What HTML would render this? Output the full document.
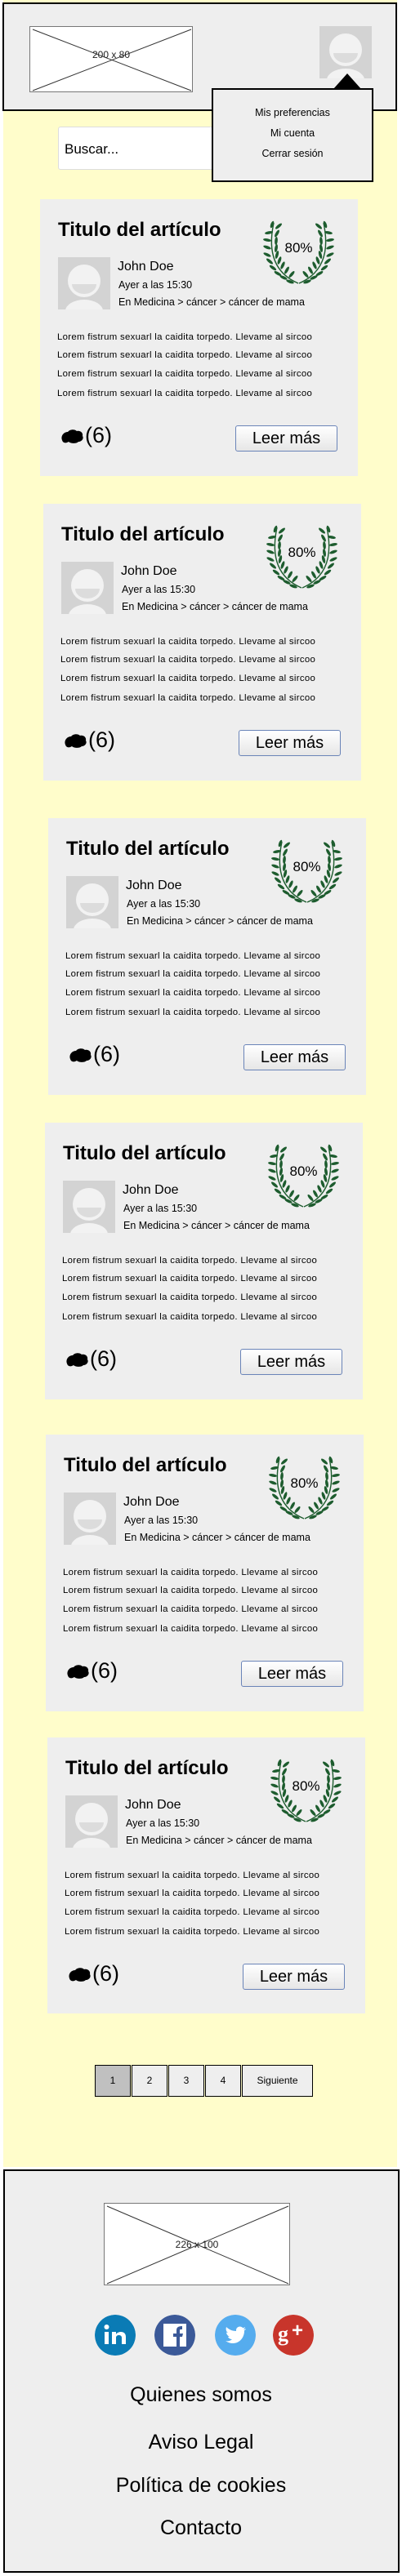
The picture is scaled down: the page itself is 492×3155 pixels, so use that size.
<!DOCTYPE html>
<html><head><meta charset="utf-8">
<style>
*{margin:0;padding:0;box-sizing:border-box}
body{width:492px;height:3155px;background:#fff;position:relative;font-family:"Liberation Sans",Arial,sans-serif;color:#000;overflow:hidden}
.abs{position:absolute}
#yellow{left:4px;top:0;width:482px;height:2654px;background:#fffdcb}
#header{left:3px;top:3px;width:483px;height:133px;background:#eee;border:2px solid #000}
.ph{background:#fff;border:1px solid #777;overflow:hidden}
.ph svg{position:absolute;left:0;top:0}
.ph span{position:absolute;left:0;right:0;text-align:center;font-size:12px;color:#222}
.av{background:#d3d3d3;overflow:hidden}
#dd{left:259px;top:108px;width:198px;height:115px;background:#eee;border:2px solid #000;text-align:center;font-size:12.5px}
#dd div{position:absolute;left:0;right:0}
#search{left:71px;top:155px;width:250px;height:53px;background:#fff;border:1px solid #ddd;border-radius:3px;font-size:17px;padding:17px 0 0 7px}
.card{position:absolute;width:389px;height:339px;background:#eee}
.card .t{position:absolute;left:22px;top:24px;font-size:24px;font-weight:bold;white-space:nowrap}
.card .a{position:absolute;left:22px;top:71px;width:64px;height:64px}
.card .n{position:absolute;left:95px;top:74px;font-size:16px;white-space:nowrap}
.card .m1{position:absolute;left:96px;top:98px;font-size:12.5px;white-space:nowrap}
.card .m2{position:absolute;left:96px;top:119px;font-size:12.5px;white-space:nowrap}
.card .lw{position:absolute;left:270px;top:25px;width:93px;height:80px}
.card .pc{position:absolute;left:270px;top:50px;width:93px;text-align:center;font-size:17px}
.card .lo{position:absolute;left:21px;font-size:11.4px;white-space:nowrap;letter-spacing:0.3px}
.card .ci{position:absolute;left:25px;top:281px}
.card .cn{position:absolute;left:55px;top:274px;font-size:27px}
.card .b{position:absolute;left:239px;top:277px;width:125px;height:32px;border:1px solid #6a84b8;border-radius:3px;background:linear-gradient(#fff,#e6e6e6);text-align:center;font-size:20px;line-height:30px}
.pg{position:absolute;top:2529px;height:39px;border:1px solid #000;background:#eee;font-size:12px;text-align:center;line-height:37px}
#footer{left:4px;top:2657px;width:485px;height:494px;background:#eee;border:2px solid #000}
.fl{position:absolute;left:0;width:492px;text-align:center;font-size:25px}
.soc{position:absolute;top:2835px;width:50px;height:50px;border-radius:50%}
</style></head><body>
<svg width="0" height="0" style="position:absolute">
<defs>
<g id="half" fill="#1d5c2e">
<path d="M46,78 Q4,60 16,4" stroke="#1d5c2e" stroke-width="1.4" fill="none"/>
<ellipse cx="36" cy="76" rx="5" ry="1.8" transform="rotate(20 36 76)"/>
<ellipse cx="38" cy="67" rx="5" ry="1.8" transform="rotate(-50 38 67)"/>
<ellipse cx="28" cy="71" rx="5" ry="1.8" transform="rotate(25 28 71)"/>
<ellipse cx="32" cy="62" rx="5" ry="1.8" transform="rotate(-60 32 62)"/>
<ellipse cx="21" cy="66" rx="5" ry="1.8" transform="rotate(30 21 66)"/>
<ellipse cx="27" cy="56" rx="5" ry="1.8" transform="rotate(-65 27 56)"/>
<ellipse cx="15" cy="59" rx="5" ry="1.8" transform="rotate(35 15 59)"/>
<ellipse cx="23" cy="50" rx="5" ry="1.8" transform="rotate(-70 23 50)"/>
<ellipse cx="11" cy="51" rx="5" ry="1.8" transform="rotate(40 11 51)"/>
<ellipse cx="20" cy="43" rx="5" ry="1.8" transform="rotate(-75 20 43)"/>
<ellipse cx="8" cy="43" rx="5" ry="1.8" transform="rotate(25 8 43)"/>
<ellipse cx="19" cy="35" rx="5" ry="1.8" transform="rotate(-80 19 35)"/>
<ellipse cx="8" cy="34" rx="5" ry="1.8" transform="rotate(20 8 34)"/>
<ellipse cx="19" cy="26" rx="5" ry="1.8" transform="rotate(-85 19 26)"/>
<ellipse cx="8" cy="25" rx="5" ry="1.8" transform="rotate(10 8 25)"/>
<ellipse cx="20" cy="17" rx="5" ry="1.8" transform="rotate(-60 20 17)"/>
<ellipse cx="10" cy="16" rx="5" ry="1.8" transform="rotate(-10 10 16)"/>
<ellipse cx="22" cy="8" rx="5" ry="1.8" transform="rotate(-40 22 8)"/>
<ellipse cx="14" cy="6" rx="4.5" ry="1.8" transform="rotate(-70 14 6)"/>
</g>
<g id="laurel"><use href="#half"/><use href="#half" transform="translate(93,0) scale(-1,1)"/></g>
<g id="avatar">
<rect width="64" height="64" fill="#d3d3d3"/>
<ellipse cx="32" cy="66" rx="23" ry="14" fill="#f2f2f2"/>
<circle cx="32" cy="29" r="20" fill="#f2f2f2"/>
<path d="M17,33 H47 A15,12 0 0 1 17,33 Z" fill="#dcdcdc"/>
</g>
<g id="cm"><path d="M2,14 C0,9 4,4 9,4 C11,1 17,0 20,3 C24,2 28,5 27,9 C29,12 26,16 22,16 C19,19 12,18 10,16 C7,18 3,18 2,14 Z" fill="#000"/></g>
</defs></svg>

<div id="yellow" class="abs"></div>
<div id="header" class="abs"></div>
<div class="abs ph" style="left:36px;top:32px;width:200px;height:81px">
<svg width="200" height="81"><line x1="3" y1="3" x2="197" y2="78" stroke="#333"/><line x1="197" y1="3" x2="3" y2="78" stroke="#333"/></svg>
<span style="top:27px;background:transparent">200 x 80</span></div>
<svg class="abs" style="left:391px;top:32px" width="64" height="64"><use href="#avatar"/></svg>
<svg class="abs" style="left:405px;top:78px" width="40" height="32"><path d="M3,31 L20,12 L37,31 Z" fill="#000"/></svg>
<div id="search" class="abs">Buscar...</div>
<div id="dd" class="abs">
<div style="top:21px">Mis preferencias</div>
<div style="top:46px">Mi cuenta</div>
<div style="top:71px">Cerrar sesión</div>
</div>

<div class="card" style="left:49px;top:244px"><div class="t">Titulo del artículo</div><svg class="a"><use href="#avatar"/></svg><div class="n">John Doe</div><div class="m1">Ayer a las 15:30</div><div class="m2">En Medicina &gt; cáncer &gt; cáncer de mama</div><svg class="lw" viewBox="0 0 93 80"><use href="#laurel"/></svg><div class="pc">80%</div><div class="lo" style="top:163px">Lorem fistrum sexuarl la caidita torpedo. Llevame al sircoo</div><div class="lo" style="top:185px">Lorem fistrum sexuarl la caidita torpedo. Llevame al sircoo</div><div class="lo" style="top:208px">Lorem fistrum sexuarl la caidita torpedo. Llevame al sircoo</div><div class="lo" style="top:232px">Lorem fistrum sexuarl la caidita torpedo. Llevame al sircoo</div><svg class="ci" width="30" height="20"><use href="#cm"/></svg><div class="cn">(6)</div><div class="b">Leer más</div></div>

<div class="card" style="left:53px;top:617px"><div class="t">Titulo del artículo</div><svg class="a"><use href="#avatar"/></svg><div class="n">John Doe</div><div class="m1">Ayer a las 15:30</div><div class="m2">En Medicina &gt; cáncer &gt; cáncer de mama</div><svg class="lw" viewBox="0 0 93 80"><use href="#laurel"/></svg><div class="pc">80%</div><div class="lo" style="top:163px">Lorem fistrum sexuarl la caidita torpedo. Llevame al sircoo</div><div class="lo" style="top:185px">Lorem fistrum sexuarl la caidita torpedo. Llevame al sircoo</div><div class="lo" style="top:208px">Lorem fistrum sexuarl la caidita torpedo. Llevame al sircoo</div><div class="lo" style="top:232px">Lorem fistrum sexuarl la caidita torpedo. Llevame al sircoo</div><svg class="ci" width="30" height="20"><use href="#cm"/></svg><div class="cn">(6)</div><div class="b">Leer más</div></div>

<div class="card" style="left:59px;top:1002px"><div class="t">Titulo del artículo</div><svg class="a"><use href="#avatar"/></svg><div class="n">John Doe</div><div class="m1">Ayer a las 15:30</div><div class="m2">En Medicina &gt; cáncer &gt; cáncer de mama</div><svg class="lw" viewBox="0 0 93 80"><use href="#laurel"/></svg><div class="pc">80%</div><div class="lo" style="top:163px">Lorem fistrum sexuarl la caidita torpedo. Llevame al sircoo</div><div class="lo" style="top:185px">Lorem fistrum sexuarl la caidita torpedo. Llevame al sircoo</div><div class="lo" style="top:208px">Lorem fistrum sexuarl la caidita torpedo. Llevame al sircoo</div><div class="lo" style="top:232px">Lorem fistrum sexuarl la caidita torpedo. Llevame al sircoo</div><svg class="ci" width="30" height="20"><use href="#cm"/></svg><div class="cn">(6)</div><div class="b">Leer más</div></div>

<div class="card" style="left:55px;top:1375px"><div class="t">Titulo del artículo</div><svg class="a"><use href="#avatar"/></svg><div class="n">John Doe</div><div class="m1">Ayer a las 15:30</div><div class="m2">En Medicina &gt; cáncer &gt; cáncer de mama</div><svg class="lw" viewBox="0 0 93 80"><use href="#laurel"/></svg><div class="pc">80%</div><div class="lo" style="top:163px">Lorem fistrum sexuarl la caidita torpedo. Llevame al sircoo</div><div class="lo" style="top:185px">Lorem fistrum sexuarl la caidita torpedo. Llevame al sircoo</div><div class="lo" style="top:208px">Lorem fistrum sexuarl la caidita torpedo. Llevame al sircoo</div><div class="lo" style="top:232px">Lorem fistrum sexuarl la caidita torpedo. Llevame al sircoo</div><svg class="ci" width="30" height="20"><use href="#cm"/></svg><div class="cn">(6)</div><div class="b">Leer más</div></div>

<div class="card" style="left:56px;top:1757px"><div class="t">Titulo del artículo</div><svg class="a"><use href="#avatar"/></svg><div class="n">John Doe</div><div class="m1">Ayer a las 15:30</div><div class="m2">En Medicina &gt; cáncer &gt; cáncer de mama</div><svg class="lw" viewBox="0 0 93 80"><use href="#laurel"/></svg><div class="pc">80%</div><div class="lo" style="top:163px">Lorem fistrum sexuarl la caidita torpedo. Llevame al sircoo</div><div class="lo" style="top:185px">Lorem fistrum sexuarl la caidita torpedo. Llevame al sircoo</div><div class="lo" style="top:208px">Lorem fistrum sexuarl la caidita torpedo. Llevame al sircoo</div><div class="lo" style="top:232px">Lorem fistrum sexuarl la caidita torpedo. Llevame al sircoo</div><svg class="ci" width="30" height="20"><use href="#cm"/></svg><div class="cn">(6)</div><div class="b">Leer más</div></div>

<div class="card" style="left:58px;top:2128px;height:338px"><div class="t">Titulo del artículo</div><svg class="a"><use href="#avatar"/></svg><div class="n">John Doe</div><div class="m1">Ayer a las 15:30</div><div class="m2">En Medicina &gt; cáncer &gt; cáncer de mama</div><svg class="lw" viewBox="0 0 93 80"><use href="#laurel"/></svg><div class="pc">80%</div><div class="lo" style="top:163px">Lorem fistrum sexuarl la caidita torpedo. Llevame al sircoo</div><div class="lo" style="top:185px">Lorem fistrum sexuarl la caidita torpedo. Llevame al sircoo</div><div class="lo" style="top:208px">Lorem fistrum sexuarl la caidita torpedo. Llevame al sircoo</div><div class="lo" style="top:232px">Lorem fistrum sexuarl la caidita torpedo. Llevame al sircoo</div><svg class="ci" width="30" height="20"><use href="#cm"/></svg><div class="cn">(6)</div><div class="b">Leer más</div></div>

<div class="pg" style="left:116px;width:44px;background:#c0c0c0">1</div>
<div class="pg" style="left:161px;width:44px">2</div>
<div class="pg" style="left:206px;width:44px">3</div>
<div class="pg" style="left:251px;width:44px">4</div>
<div class="pg" style="left:296px;width:87px">Siguiente</div>

<div id="footer" class="abs"></div>
<div class="abs ph" style="left:127px;top:2698px;width:228px;height:101px">
<svg width="228" height="101"><line x1="3" y1="3" x2="225" y2="98" stroke="#333"/><line x1="225" y1="3" x2="3" y2="98" stroke="#333"/></svg>
<span style="top:43px">226 x 100</span></div>

<svg class="soc" style="left:116px" width="50" height="50" viewBox="0 0 50 50"><ellipse cx="25" cy="25" rx="25" ry="25" fill="#0a7bb5"/><rect x="12" y="21" width="5" height="15" fill="#fff"/><circle cx="14.5" cy="15" r="3" fill="#fff"/><path d="M21,21 H26 V24 C28,20 38,19 38,27 V36 H33 V28 C33,24 26,24 26,28 V36 H21 Z" fill="#fff"/></svg>
<svg class="soc" style="left:189px" width="50" height="50" viewBox="0 0 50 50"><circle cx="25" cy="25" r="25" fill="#3b5998"/><rect x="11" y="11" width="28" height="28" fill="#fff"/><path d="M27,39 V27 H23 V23 H27 V19 C27,15 30,14 34,14 V18 H32 C31,18 31,19 31,20 V23 H35 L34,27 H31 V39 Z" fill="#3b5998"/></svg>
<svg class="soc" style="left:263px" width="50" height="50" viewBox="0 0 50 50"><circle cx="25" cy="25" r="25" fill="#55acee"/><path d="M38,17 C37,18 36,18 35,18 C36,17 37,16 37,15 C36,16 35,16 34,16 C31,13 26,15 26,19 V20 C21,20 17,18 14,15 C13,18 14,21 16,22 C15,22 14,22 14,21 C14,24 16,26 18,27 C17,27 16,27 16,27 C17,29 19,30 21,30 C19,32 16,33 13,32 C16,34 19,35 22,35 C31,35 36,27 36,20 V19 C37,19 38,18 38,17 Z" fill="#fff"/></svg>
<svg class="soc" style="left:334px" width="50" height="50" viewBox="0 0 50 50"><circle cx="25" cy="25" r="25" fill="#c8352b"/><text x="6" y="32" font-family="Liberation Serif,serif" font-size="26" font-weight="bold" fill="#fff">g</text><text x="23" y="27" font-family="Liberation Sans,sans-serif" font-size="24" font-weight="bold" fill="#fff">+</text></svg>

<div class="fl" style="top:2919px">Quienes somos</div>
<div class="fl" style="top:2977px">Aviso Legal</div>
<div class="fl" style="top:3030px">Política de cookies</div>
<div class="fl" style="top:3082px">Contacto</div>
</body></html>
